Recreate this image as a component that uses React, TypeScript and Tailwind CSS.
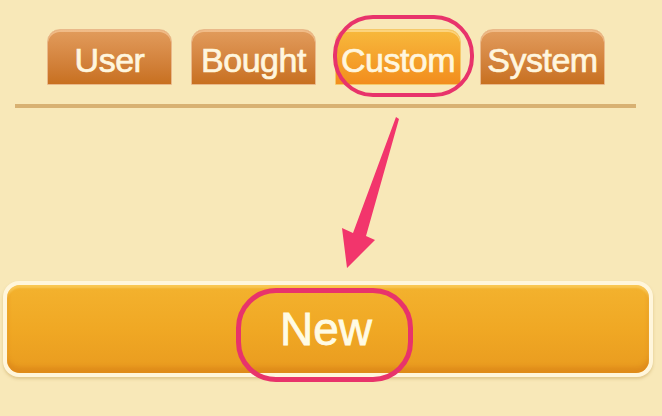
import React from 'react';

const tabs = [
  { label: 'User', active: false },
  { label: 'Bought', active: false },
  { label: 'Custom', active: true },
  { label: 'System', active: false },
];

const App: React.FC = () => {
  return (
    <div
      className="relative w-[662px] h-[416px] overflow-hidden bg-[#f8e8b8]"
      style={{ fontFamily: '"Liberation Sans", Arial, sans-serif' }}
    >
      {/* tabs */}
      <div className="flex pt-[29px] pl-[47px] gap-[19px]">
        {tabs.map((t) => (
          <div
            key={t.label}
            className={
              t.active
                ? 'w-[126px] h-[56px] rounded-t-[13px] border border-[#f5c96a] bg-gradient-to-b from-[#f7b93c] to-[#f28d1c] flex items-center justify-center shadow-[inset_0_2px_0_rgba(255,230,170,0.6)]'
                : 'w-[125px] h-[56px] rounded-t-[13px] border border-[#e9b98a] bg-gradient-to-b from-[#e29c5c] to-[#c8701f] flex items-center justify-center shadow-[inset_0_2px_0_rgba(255,220,180,0.5)]'
            }
          >
            <span className="text-[34px] leading-none text-[#fff6de] tracking-[-0.5px] pt-[5px] [-webkit-text-stroke:0.7px_#fff6de] whitespace-nowrap">
              {t.label}
            </span>
          </div>
        ))}
      </div>

      {/* divider */}
      <div className="mt-[19px] ml-[15px] w-[621px] h-[4px] bg-[#d8b172]" />

      {/* big button */}
      <div className="mt-[173px] ml-[3px] w-[650px] h-[96px] rounded-[16px] bg-[#fff6dc] p-[4px] shadow-[0_2px_3px_rgba(180,140,60,0.35)]">
        <div className="w-full h-full rounded-[13px] bg-gradient-to-b from-[#f3b22e] via-[#f0a824] to-[#e99b1f] shadow-[inset_0_-6px_4px_rgba(210,120,20,0.45),inset_0_3px_2px_rgba(255,220,120,0.5)] flex items-center justify-center">
          <span className="text-[46px] leading-none text-[#fffbe4] pr-[4px] [-webkit-text-stroke:0.8px_#fffbe4]">New</span>
        </div>
      </div>

      {/* annotations */}
      <div className="absolute left-[333px] top-[15px] w-[141px] h-[82px] rounded-[40px] border-[4px] border-[#e8336b]" />
      <div className="absolute left-[236px] top-[288px] w-[177px] h-[94px] rounded-[40px] border-[5px] border-[#e8336b]" />
      <svg className="absolute left-0 top-0" width="662" height="416" viewBox="0 0 662 416">
        <path
          d="M396 117 L399 119 L366 236 L375 240 L347 268 L342 228 L353 233 Z"
          fill="#f2356c"
        />
      </svg>
    </div>
  );
};

export default App;
